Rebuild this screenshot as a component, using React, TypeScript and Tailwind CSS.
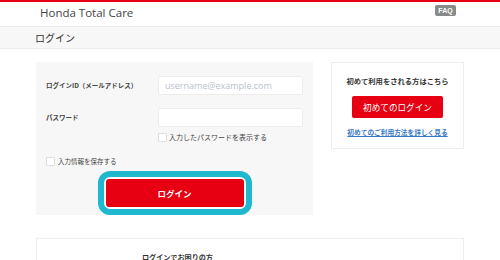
import React from 'react';

const jp = { fontFamily: '"Noto Sans CJK JP", "Noto Sans", sans-serif' };

const Checkbox: React.FC = () => (
  <span className="inline-block w-[9px] h-[9px] bg-white border border-[#dddddd] rounded-[1px] shrink-0" />
);

const App: React.FC = () => {
  return (
    <div className="w-[500px] h-[260px] bg-white overflow-hidden text-[#333]" style={jp}>
      <div className="h-[2px] bg-[#e60012]" />
      <header className="h-[24px] flex items-start justify-between pl-[40px] pr-[44px]">
        <span
          className="text-[11.5px] leading-none mt-[5px] text-[#444] font-medium"
          style={{ fontFamily: '"Open Sans", "Noto Sans", sans-serif' }}
        >
          Honda Total Care
        </span>
        <span className="mt-[3px] w-[21px] h-[11px] bg-[#8a8a8a] rounded-[2px] text-white text-[7px] font-bold leading-none flex items-center justify-center" style={{ fontFamily: '"Liberation Sans", sans-serif' }}>
          FAQ
        </span>
      </header>
      <div className="h-[23px] bg-[#f7f7f7] border-y border-[#ebebeb] flex items-center pl-[35px]">
        <span className="text-[10px] leading-none">ログイン</span>
      </div>

      <main className="w-[428px] mx-auto mt-[13px] flex gap-[18px] items-start">
        <section className="w-[277px] bg-[#f7f7f7] pt-[14px] flex flex-col">
          <div className="flex items-center pl-[10px] pr-[10px]">
            <span className="w-[112px] text-[6.5px] leading-none font-bold text-[#444]">ログインID（メールアドレス）</span>
            <div className="flex-1 h-[19px] bg-white border border-[#ececec] rounded-[2px] flex items-center pl-[6px]">
              <span className="text-[9px] leading-none text-[#b8c2d0]" style={{ fontFamily: '"Open Sans", sans-serif' }}>
                username@example.com
              </span>
            </div>
          </div>
          <div className="flex items-center pl-[10px] pr-[10px] mt-[13px]">
            <span className="w-[112px] text-[6.5px] leading-none font-bold text-[#444]">パスワード</span>
            <div className="flex-1 h-[19px] bg-white border border-[#ececec] rounded-[2px]" />
          </div>
          <div className="flex items-center gap-[2px] pl-[122px] mt-[6px]">
            <Checkbox />
            <span className="text-[7px] leading-none text-[#444]">入力したパスワードを表示する</span>
          </div>
          <div className="flex items-center gap-[3px] pl-[10px] mt-[15px]">
            <Checkbox />
            <span className="text-[6.5px] leading-none text-[#444]">入力情報を保存する</span>
          </div>
          <div className="self-center mt-[5px] border-[6px] border-[#20b8cf] rounded-[12px] bg-white p-[2px]">
            <button className="w-[138px] h-[28px] bg-[#e60012] rounded-[3px] text-white text-[8.5px] font-bold leading-none flex items-center justify-center">
              ログイン
            </button>
          </div>
        </section>

        <aside className="w-[133px] border border-[#ededed] bg-white pt-[13px] pb-[11px] flex flex-col items-center">
          <p className="text-[7.3px] leading-[10px] font-bold text-[#333]">初めて利用をされる方はこちら</p>
          <button className="mt-[10px] w-[91px] h-[22px] bg-[#e60012] rounded-[2px] text-white text-[8.6px] leading-none flex items-center justify-center">
            初めてのログイン
          </button>
          <a className="mt-[9px] text-[6.7px] leading-[10px] font-bold text-[#3a78c4] underline">初めてのご利用方法を詳しく見る</a>
        </aside>
      </main>

      <div className="w-[428px] mx-auto mt-[23px] border border-[#ededed] pt-[13px] pl-[105px]">
        <p className="text-[7.1px] leading-[10px] font-bold text-[#333]">ログインでお困りの方</p>
      </div>
    </div>
  );
};

export default App;
